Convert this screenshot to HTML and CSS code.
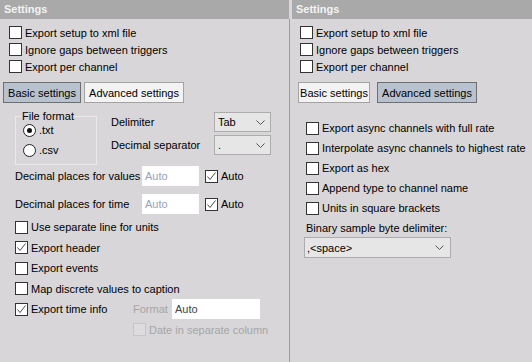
FILE: index.html
```html
<!DOCTYPE html>
<html lang="en">
<head>
    <meta charset="UTF-8">
    <title>Export settings</title>
    <link rel="stylesheet" href="styles.css">
</head>
<body>
    <div class="workspace">
        <!-- left: basic settings page -->
        <section class="panel panel-basic">
            <div class="panel-title">Settings</div>
            <div class="common-options">
                <label class="check"><span class="box"></span>Export setup to xml file</label>
                <label class="check"><span class="box"></span>Ignore gaps between triggers</label>
                <label class="check"><span class="box"></span>Export per channel</label>
            </div>
            <div class="tabs">
                <button class="tab tab-basic active">Basic settings</button>
                <button class="tab tab-advanced">Advanced settings</button>
            </div>
            <div class="basic-page">
                <div class="format-row">
                    <fieldset class="file-format">
                        <legend>File format</legend>
                        <label class="radio"><span class="dot checked"></span>.txt</label>
                        <label class="radio"><span class="dot"></span>.csv</label>
                    </fieldset>
                    <div class="separators">
                        <span>Delimiter</span>
                        <div class="dropdown">
                            <span>Tab</span>
                            <svg width="9" height="5" viewBox="0 0 9 5"><path d="M0.5 0.5 L4.5 4.5 L8.5 0.5" fill="none" stroke="#555" stroke-width="1"/></svg>
                        </div>
                        <span>Decimal separator</span>
                        <div class="dropdown">
                            <span>.</span>
                            <svg width="9" height="5" viewBox="0 0 9 5"><path d="M0.5 0.5 L4.5 4.5 L8.5 0.5" fill="none" stroke="#555" stroke-width="1"/></svg>
                        </div>
                    </div>
                </div>

                <div class="places">
                    <span>Decimal places for values</span>
                    <input class="field" type="text" placeholder="Auto">
                    <label class="check"><span class="box"><svg width="11" height="11" viewBox="0 0 11 11"><path d="M1.5 5.5 L4 8.5 L9.5 1.5" fill="none" stroke="#4a4a4a" stroke-width="1"/></svg></span>Auto</label>
                    <span>Decimal places for time</span>
                    <input class="field" type="text" placeholder="Auto">
                    <label class="check"><span class="box"><svg width="11" height="11" viewBox="0 0 11 11"><path d="M1.5 5.5 L4 8.5 L9.5 1.5" fill="none" stroke="#4a4a4a" stroke-width="1"/></svg></span>Auto</label>
                </div>

                <div class="export-options">
                    <label class="check row"><span class="box"></span>Use separate line for units</label>
                    <label class="check row"><span class="box"><svg width="11" height="11" viewBox="0 0 11 11"><path d="M1.5 5.5 L4 8.5 L9.5 1.5" fill="none" stroke="#4a4a4a" stroke-width="1"/></svg></span>Export header</label>
                    <label class="check row"><span class="box"></span>Export events</label>
                    <label class="check row"><span class="box"></span>Map discrete values to caption</label>
                    <div class="time-row">
                        <label class="check time-check"><span class="box"><svg width="11" height="11" viewBox="0 0 11 11"><path d="M1.5 5.5 L4 8.5 L9.5 1.5" fill="none" stroke="#4a4a4a" stroke-width="1"/></svg></span>Export time info</label>
                        <span class="muted format-label">Format</span>
                        <input class="field format-field" type="text" value="Auto" disabled>
                    </div>
                    <label class="check row date-row muted"><span class="box disabled"></span>Date in separate column</label>
                </div>
            </div>
        </section>

        <div class="splitter"></div>

        <!-- right: advanced settings page -->
        <section class="panel panel-advanced">
            <div class="panel-title">Settings</div>
            <div class="common-options">
                <label class="check"><span class="box"></span>Export setup to xml file</label>
                <label class="check"><span class="box"></span>Ignore gaps between triggers</label>
                <label class="check"><span class="box"></span>Export per channel</label>
            </div>
            <div class="tabs">
                <button class="tab tab-basic">Basic settings</button>
                <button class="tab tab-advanced active">Advanced settings</button>
            </div>
            <div class="advanced-page">
                <label class="check row"><span class="box"></span>Export async channels with full rate</label>
                <label class="check row"><span class="box"></span>Interpolate async channels to highest rate</label>
                <label class="check row"><span class="box"></span>Export as hex</label>
                <label class="check row"><span class="box"></span>Append type to channel name</label>
                <label class="check row"><span class="box"></span>Units in square brackets</label>
                <div class="binary-label">Binary sample byte delimiter:</div>
                <div class="dropdown binary-select">
                    <span>,&lt;space&gt;</span>
                    <svg width="9" height="5" viewBox="0 0 9 5"><path d="M0.5 0.5 L4.5 4.5 L8.5 0.5" fill="none" stroke="#555" stroke-width="1"/></svg>
                </div>
            </div>
        </section>
    </div>
</body>
</html>
```

FILE: styles.css
```css
* {
    box-sizing: border-box;
}
body {
    margin: 0;
    font-family: "Liberation Sans", Arial, sans-serif;
    font-size: 11px;
    color: #000;
    background-color: #d8d6d8;
}
.workspace {
    display: flex;
    width: 532px;
    height: 362px;
}
.panel {
    display: flex;
    flex-direction: column;
}
.panel-basic {
    width: 289px;
}
.panel-advanced {
    flex: 1;
}
.splitter {
    width: 3px;
    padding-top: 19px;
}
.splitter::before {
    content: "";
    display: block;
    width: 1px;
    height: 100%;
    background-color: #9c9c9c;
}
.panel-title {
    height: 19px;
    line-height: 19px;
    padding-left: 4px;
    background-color: #a9a9a9;
    color: #f3f3f3;
    font-weight: bold;
}

/* checkboxes and radios */
.check {
    display: flex;
    align-items: center;
    gap: 3px;
    height: 17px;
    white-space: nowrap;
}
.box {
    flex: none;
    display: flex;
    align-items: center;
    justify-content: center;
    width: 13px;
    height: 13px;
    border: 1px solid #333;
    background-color: #fff;
}
.box.disabled {
    border-color: #c6c6c6;
    background-color: #dddbdd;
}
.radio {
    display: flex;
    align-items: center;
    gap: 3px;
    height: 20px;
    margin-left: 1px;
}
.dot {
    flex: none;
    display: flex;
    align-items: center;
    justify-content: center;
    width: 13px;
    height: 13px;
    border: 1px solid #222;
    border-radius: 50%;
    background-color: #fff;
}
.dot.checked::after {
    content: "";
    width: 5px;
    height: 5px;
    border-radius: 50%;
    background-color: #111;
}
.muted {
    color: #a6a6a6;
}

.common-options {
    padding: 5px 0 0 9px;
}
.panel-advanced .common-options {
    padding-left: 8px;
}

/* tab buttons */
.tabs {
    display: flex;
    gap: 3px;
    margin: 7px 0 0 3px;
}
.panel-advanced .tabs {
    gap: 7px;
    margin-left: 6px;
}
.tab {
    height: 21px;
    padding: 0;
    font: inherit;
    color: #000;
    white-space: nowrap;
    background-color: #f3f3f3;
    border: 1px solid #a3a3a3;
}
.tab.active {
    background-color: #b8c2cf;
    border-color: #6f6f6f;
}
.panel-basic .tab-basic {
    width: 78px;
}
.panel-basic .tab-advanced {
    width: 100px;
}
.panel-advanced .tab-basic {
    width: 72px;
}
.panel-advanced .tab-advanced {
    width: 100px;
}

/* dropdowns and fields */
.dropdown {
    display: flex;
    align-items: center;
    justify-content: space-between;
    height: 20px;
    padding: 0 5px 0 3px;
    border: 1px solid #acacac;
    background-color: #e6e6e6;
}
.field {
    width: 57px;
    height: 20px;
    padding: 0 3px;
    border: none;
    background-color: #fff;
    font: inherit;
    color: #555;
}
.field::placeholder {
    color: #98a2b6;
}

/* basic page */
.basic-page {
    padding: 7px 0 0 15px;
}
.format-row {
    display: flex;
    align-items: flex-start;
}
.file-format {
    width: 82px;
    min-width: 0;
    margin: 0;
    padding: 0 0 4px 6px;
    border: 1px solid #e9e9e9;
}
.file-format legend {
    padding: 0;
    line-height: 12px;
}
.file-format .radio:first-of-type {
    margin-top: -2px;
}
.separators {
    display: grid;
    grid-template-columns: 103px 57px;
    row-gap: 3px;
    align-items: center;
    margin: 2px 0 0 14px;
}
.places {
    display: grid;
    grid-template-columns: 127px 57px auto;
    row-gap: 8px;
    align-items: center;
    margin-top: 1px;
}
.places .check {
    margin-left: 6px;
}
.export-options {
    margin-top: 3px;
}
.row {
    height: 20.5px;
}
.time-row {
    display: flex;
    align-items: center;
    height: 20.5px;
}
.time-check {
    width: 118px;
}
.format-label {
    width: 39px;
}
.format-field {
    width: 88px;
    color: #444;
}
.date-row {
    height: 20px;
    padding-left: 118px;
}

/* advanced page */
.advanced-page {
    padding: 15px 0 0 14px;
}
.advanced-page .row {
    height: 20px;
}
.binary-label {
    height: 19px;
    line-height: 20px;
}
.binary-select {
    width: 147px;
    height: 21px;
    margin-left: -2px;
    padding: 0 6px 0 2px;
}
```
